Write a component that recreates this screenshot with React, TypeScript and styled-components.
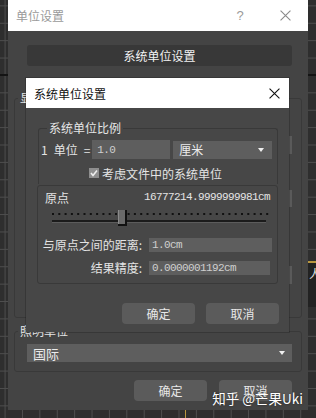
import React from 'react';
import styled, { createGlobalStyle } from 'styled-components';

const GlobalStyle = createGlobalStyle`
  html, body {
    margin: 0;
    padding: 0;
  }
  body {
    width: 316px;
    height: 418px;
    overflow: hidden;
    background: #2e2e2e;
    font-family: "Noto Sans CJK SC", "Noto Sans", sans-serif;
  }
`;

// viewport grid behind the dialogs
const Screen = styled.div`
  position: relative;
  width: 316px;
  height: 418px;
  overflow: hidden;
  background-color: #2e2e2e;
  background-image:
    linear-gradient(to bottom, transparent 74px, #141414 74px, #141414 76px, transparent 76px),
    linear-gradient(to right, #4e4e4e 1px, transparent 1px),
    linear-gradient(to bottom, #4e4e4e 1px, transparent 1px);
  background-size: 100% 100%, 17.4px 17.4px, 17.4px 17.4px;
  background-position: 0 0, 4.6px 0, 0 5.4px;
  background-repeat: no-repeat, repeat, repeat;
`;

const AxisMark = styled.div`
  position: absolute;
  left: 185px;
  top: 410px;
  width: 1px;
  height: 8px;
  background: #b8963f;
`;

const SidePanel = styled.div`
  position: absolute;
  left: 308px;
  top: 261px;
  width: 20px;
  height: 44px;
  background: #222;
  border-top: 2px solid #b8963f;
  color: #ddd;
  font-size: 12px;
  line-height: 22px;
  padding-left: 1px;
`;

// -------------------- window parts --------------------
const Window = styled.div`
  margin-left: 8px;
  width: 300px;
  height: 410px;
  background: #444;
  display: flex;
  flex-direction: column;
  color: #e4e4e4;
  font-size: 12px;
`;

const Popup = styled.div`
  position: absolute;
  left: 26px;
  top: 78px;
  width: 263px;
  height: 254px;
  background: #474747;
  display: flex;
  flex-direction: column;
  color: #e4e4e4;
  font-size: 12px;
  box-shadow: 0 0 0 1px rgba(0, 0, 0, 0.18);
`;

const TitleBar = styled.div<{ $height: number; $active?: boolean }>`
  flex: none;
  height: ${({ $height }) => $height}px;
  background: #fff;
  display: flex;
  align-items: center;
  padding-left: 8px;
  color: ${({ $active }) => ($active ? '#111' : '#9a9a9a')};
  font-size: 12px;
`;

const TitleText = styled.span`
  flex: 1;
`;

const TitleButton = styled.span<{ $width: number }>`
  width: ${({ $width }) => $width}px;
  height: 100%;
  display: flex;
  align-items: center;
  justify-content: center;
  font-family: "Liberation Sans", sans-serif;
  font-size: 13px;
`;

const CloseIcon = ({ size, color }: { size: number; color: string }) => (
  <svg width={size} height={size} viewBox="0 0 10 10">
    <path d="M0.5 0.5 L9.5 9.5 M9.5 0.5 L0.5 9.5" stroke={color} strokeWidth="1" fill="none" />
  </svg>
);

const SectionBar = styled.div`
  margin: 14px 16px 0 19px;
  height: 21px;
  border-radius: 3px;
  background: #383838;
  display: flex;
  align-items: center;
  justify-content: center;
  color: #f2f2f2;
`;

const Group = styled.fieldset<{ $mt: number; $ml: number; $mr: number; $open?: boolean }>`
  margin: ${({ $mt, $ml, $mr }) => `${$mt}px ${$mr}px 0 ${$ml}px`};
  padding: 0;
  min-width: 0;
  border: 1px solid #393939;
  border-radius: ${({ $open }) => ($open ? '3px 3px 0 0' : '3px')};
  ${({ $open }) => $open && 'border-bottom: none;'}
`;

const Legend = styled.legend<{ $ml: number }>`
  margin-left: ${({ $ml }) => $ml}px;
  padding: 0 2px;
  line-height: 16px;
  font-size: 12px;
  color: #e6e6e6;
`;

const Box = styled.div`
  margin: 1px 11px 0 11px;
  border: 1px solid #393939;
  border-radius: 3px;
  padding-bottom: 8px;
`;

const HiddenRows = styled.div`
  display: flex;
  flex-direction: column;
  align-items: flex-end;
  padding: 0 9px 33px 0;
`;

const Stub = styled.div<{ $mt: number; $h: number }>`
  margin-top: ${({ $mt }) => $mt}px;
  width: 140px;
  height: ${({ $h }) => $h}px;
  background: #5a5a5a;
`;

const Select = styled.div<{ $width?: number }>`
  height: 18px;
  ${({ $width }) => ($width ? `width: ${$width}px;` : '')}
  background: #5e5e5e;
  display: flex;
  align-items: center;
  padding: 0 8px 0 6px;
  box-sizing: border-box;
  color: #ececec;
  font-size: 12px;
`;

const SelectText = styled.span`
  flex: 1;
`;

const Arrow = styled.span`
  width: 0;
  height: 0;
  border-left: 3.5px solid transparent;
  border-right: 3.5px solid transparent;
  border-top: 4px solid #f0f0f0;
`;

const WideSelect = styled(Select)`
  margin: 5px 9px 0 12px;
  padding-right: 7px;
  font-size: 13px;
`;

const ButtonRow = styled.div<{ $mt: number; $gap: number; $pr: number }>`
  display: flex;
  justify-content: flex-end;
  gap: ${({ $gap }) => $gap}px;
  margin-top: ${({ $mt }) => $mt}px;
  padding-right: ${({ $pr }) => $pr}px;
`;

const Button = styled.button`
  width: 73px;
  height: 21px;
  border: none;
  border-radius: 4px;
  background: #5b5b5b;
  color: #e8e8e8;
  font-family: inherit;
  font-size: 12px;
  padding: 0;
  display: flex;
  align-items: center;
  justify-content: center;
`;

// -------------------- popup content --------------------
const UnitRow = styled.div`
  margin-top: 4px;
  height: 19px;
  display: flex;
  align-items: center;
  padding-left: 2px;
`;

const UnitLabel = styled.span`
  display: flex;
  gap: 6px;
  margin-right: 2px;
`;

const Mono = styled.span`
  font-family: "Liberation Mono", "DejaVu Sans Mono", monospace;
  font-size: 11px;
  letter-spacing: -0.6px;
`;

const Field = styled.div<{ $width: number; $height: number; $pl: number }>`
  width: ${({ $width }) => $width}px;
  height: ${({ $height }) => $height}px;
  background: #5e5e5e;
  color: #cfcfcf;
  display: flex;
  align-items: center;
  padding-left: ${({ $pl }) => $pl}px;
  box-sizing: border-box;
`;

const CheckRow = styled.div`
  margin-top: 6px;
  height: 16px;
  display: flex;
  align-items: center;
  gap: 3px;
  padding: 0 0 3px 50px;
`;

const CheckBox = styled.span`
  width: 10px;
  height: 10px;
  background: #8e8e8e;
  display: flex;
  align-items: center;
  justify-content: center;
`;

const OriginRow = styled.div`
  margin-top: 4px;
  height: 14px;
  display: flex;
  align-items: center;
  justify-content: space-between;
  padding: 0 7px 0 7px;
`;

const SliderWrap = styled.div`
  margin-top: 4px;
  height: 19px;
`;

const FormRow = styled.div<{ $mt: number }>`
  margin-top: ${({ $mt }) => $mt}px;
  display: flex;
  align-items: center;
  gap: 7px;
`;

const FormLabel = styled.span`
  width: 104px;
  text-align: right;
  line-height: 14px;
`;

const Slider = () => {
  const dots = Array.from({ length: 35 }, (_, i) => 14 + i * 6.3);
  return (
    <svg width="240" height="19" viewBox="0 0 240 19">
      {dots.map((x) => (
        <rect key={x} x={x} y={5} width="2" height="2" fill="#111" />
      ))}
      <rect x="14" y="12" width="214" height="2" fill="#1b1b1b" />
      <rect x="14" y="14" width="214" height="1" fill="#5c5c5c" />
      <rect x="80" y="2" width="9" height="16" fill="#111" />
      <rect x="80" y="2" width="7" height="14" fill="#6a6a6a" />
      <rect x="80" y="2" width="1" height="14" fill="#8a8a8a" />
    </svg>
  );
};

const Watermark = styled.div`
  position: absolute;
  right: 13px;
  top: 388px;
  color: #fff;
  font-size: 13.5px;
  line-height: 20px;
  text-shadow: 0 0 2px rgba(0, 0, 0, 0.5);
`;

export default function App() {
  return (
    <>
      <GlobalStyle />
      <Screen>
        <Window>
          <TitleBar $height={31}>
            <TitleText>单位设置</TitleText>
            <TitleButton $width={44}>?</TitleButton>
            <TitleButton $width={46}>
              <CloseIcon size={11} color="#8a8a8a" />
            </TitleButton>
          </TitleBar>
          <SectionBar>系统单位设置</SectionBar>
          <Group $mt={24} $ml={6} $mr={6}>
            <Legend $ml={3}>显示单位比例</Legend>
            <HiddenRows>
              <Stub $mt={30} $h={18} />
              <Stub $mt={36} $h={17} />
              <Stub $mt={59} $h={18} />
            </HiddenRows>
          </Group>
          <Group $mt={5} $ml={6} $mr={6}>
            <Legend $ml={3}>照明单位</Legend>
            <WideSelect>
              <SelectText>国际</SelectText>
              <Arrow />
            </WideSelect>
            <div style={{ height: 9 }} />
          </Group>
          <ButtonRow $mt={8} $gap={12} $pr={16}>
            <Button>确定</Button>
            <Button>取消</Button>
          </ButtonRow>
        </Window>

        <Popup>
          <TitleBar $height={30} $active>
            <TitleText>系统单位设置</TitleText>
            <TitleButton $width={30}>
              <CloseIcon size={11} color="#111" />
            </TitleButton>
          </TitleBar>
          <Group $mt={12} $ml={12} $mr={11} $open>
            <Legend $ml={8}>系统单位比例</Legend>
            <UnitRow>
              <UnitLabel>
                <span>1</span>
                <span>单位</span>
                <span>=</span>
              </UnitLabel>
              <Field $width={78} $height={19} $pl={5}>
                <Mono>1.0</Mono>
              </Field>
              <Select $width={99} style={{ marginLeft: 3 }}>
                <SelectText>厘米</SelectText>
                <Arrow />
              </Select>
            </UnitRow>
            <CheckRow>
              <CheckBox>
                <svg width="8" height="8" viewBox="0 0 8 8">
                  <path d="M1 4 L3 6.5 L7 1.5" stroke="#ededed" strokeWidth="1.6" fill="none" />
                </svg>
              </CheckBox>
              <span>考虑文件中的系统单位</span>
            </CheckRow>
          </Group>
          <Box>
            <OriginRow>
              <span>原点</span>
              <Mono>16777214.9999999981cm</Mono>
            </OriginRow>
            <SliderWrap>
              <Slider />
            </SliderWrap>
            <FormRow $mt={11}>
              <FormLabel>与原点之间的距离:</FormLabel>
              <Field $width={123} $height={14} $pl={3}>
                <Mono>1.0cm</Mono>
              </Field>
            </FormRow>
            <FormRow $mt={9}>
              <FormLabel>结果精度:</FormLabel>
              <Field $width={121} $height={14} $pl={3}>
                <Mono>0.0000001192cm</Mono>
              </Field>
            </FormRow>
          </Box>
          <ButtonRow $mt={19} $gap={11} $pr={10}>
            <Button>确定</Button>
            <Button>取消</Button>
          </ButtonRow>
        </Popup>

        <SidePanel>人</SidePanel>
        <AxisMark />
        <Watermark>知乎 @芒果Uki</Watermark>
      </Screen>
    </>
  );
}
